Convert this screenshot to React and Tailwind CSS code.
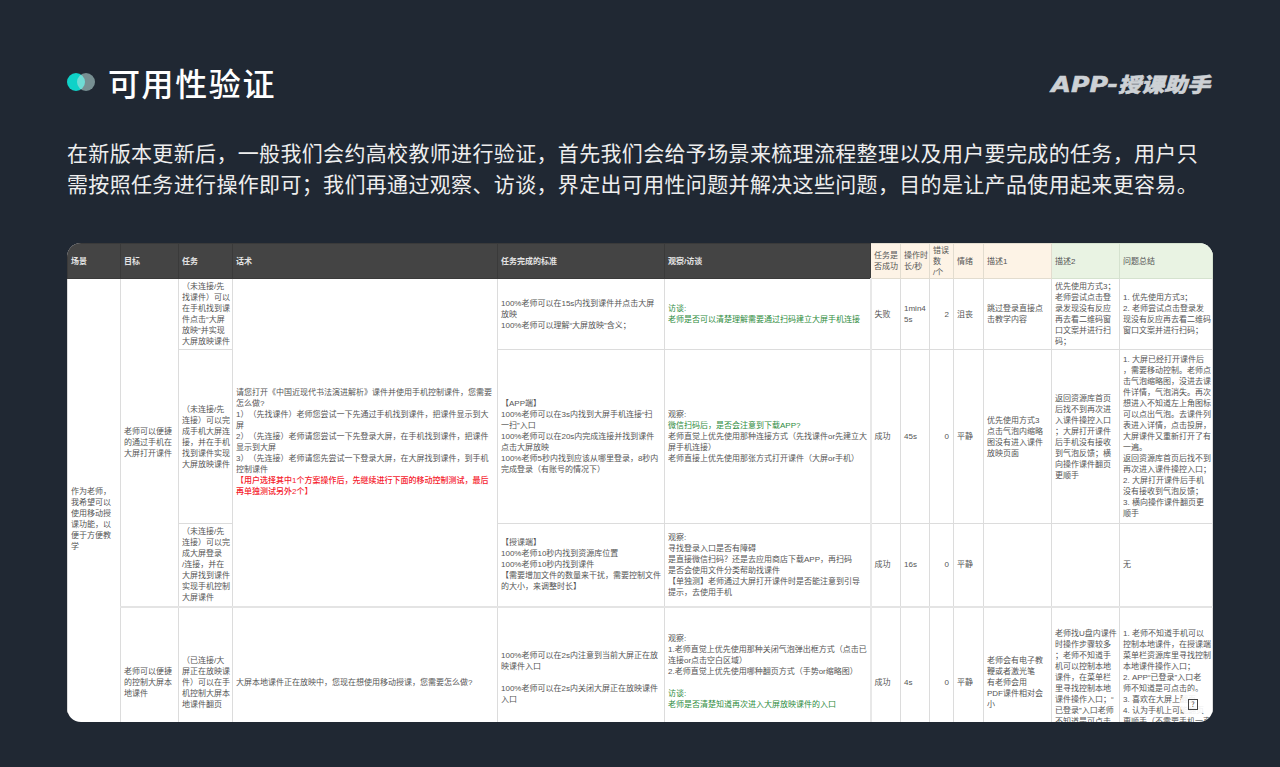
import React from "react";

const cell = "border border-[#dcdcdc] pl-[3px] pr-[1px] align-middle";
const wide = "border border-[#dcdcdc] pl-[3px] pr-[6px] align-middle";
const std = "border border-[#dcdcdc] pl-[3px] pr-[2.5px] align-middle";
const num = "border border-[#dcdcdc] pl-[3px] pr-[4px] align-middle text-right";
const first = "border border-[#dcdcdc] border-l-2 border-l-[#e8e8e8] pl-[3px] pr-[1px] align-middle";
const head = "border border-[#3a3a3a] pl-[3px] pr-[1px] align-middle text-left font-bold text-[#e4e4e4] bg-[#444444]";
const warm = "border border-[#e2dccf] pl-[3px] pr-[1px] align-middle text-left font-normal text-[#555555] bg-[#fdf3e6]";
const mint = "border border-[#d5e2cf] pl-[3px] pr-[1px] align-middle text-left font-normal text-[#555555] bg-[#e9f3e3]";

const Green = ({ children }) => <span className="text-[#2e8b3d]">{children}</span>;

const App = () => {
    return (
        <div className="w-[1280px] h-[767px] overflow-hidden bg-[#202833] font-['Noto_Sans_CJK_SC','Noto_Sans',sans-serif]">
            <div className="flex items-center justify-between pl-[67px] pr-[68px] pt-[62px]">
                <div className="flex items-center gap-[13px]">
                    <svg width="28" height="20" viewBox="0 0 28 20">
                        <circle cx="9" cy="10" r="9" fill="#0fd2c8" />
                        <circle cx="19" cy="10" r="9" fill="#bfe3e0" fillOpacity="0.55" />
                    </svg>
                    <h1 className="text-[32px] leading-[38px] font-medium tracking-[1.6px] text-white">可用性验证</h1>
                </div>
                <p className="origin-right scale-x-[1.15] translate-y-[3px] mr-[2px] italic font-black text-[20px] leading-[38px] text-[#cdd1d5] [-webkit-text-stroke:0.6px_#cdd1d5]">
                    <span className="font-['DejaVu_Sans',sans-serif] font-bold text-[22px] leading-[38px]">APP-</span>授课助手
                </p>
            </div>

            <p className="mt-[36px] mx-[67px] w-[1146px] text-[21px] leading-[31px] tracking-[0.34px] text-[#eeeeee]">
                在新版本更新后，一般我们会约高校教师进行验证，首先我们会给予场景来梳理流程整理以及用户要完成的任务，用户只需按照任务进行操作即可；我们再通过观察、访谈，界定出可用性问题并解决这些问题，目的是让产品使用起来更容易。
            </p>

            <div className="relative mt-[44px] mx-[67px] h-[479px] overflow-hidden rounded-[14px] bg-white">
                <table className="table-fixed w-[1145px] border-collapse break-words [line-break:anywhere] [text-spacing-trim:space-all] font-['Liberation_Sans','Noto_Sans_CJK_SC',sans-serif] text-[8px] leading-[11px] text-[#555555]">
                    <colgroup>
                        <col className="w-[53px]" />
                        <col className="w-[58px]" />
                        <col className="w-[54px]" />
                        <col className="w-[265px]" />
                        <col className="w-[167px]" />
                        <col className="w-[206px]" />
                        <col className="w-[30px]" />
                        <col className="w-[29px]" />
                        <col className="w-[24px]" />
                        <col className="w-[30px]" />
                        <col className="w-[68px]" />
                        <col className="w-[68px]" />
                        <col className="w-[93px]" />
                    </colgroup>
                    <thead>
                        <tr className="h-[35px]">
                            <th className={head}>场景</th>
                            <th className={head}>目标</th>
                            <th className={head}>任务</th>
                            <th className={head}>话术</th>
                            <th className={head}>任务完成的标准</th>
                            <th className={head}>观察/访谈</th>
                            <th className={warm}>任务是否成功</th>
                            <th className={warm}>操作时长/秒</th>
                            <th className={warm}>错误<br />数<br />/个</th>
                            <th className={warm}>情绪</th>
                            <th className={warm}>描述1</th>
                            <th className={mint}>描述2</th>
                            <th className={mint}>问题总结</th>
                        </tr>
                    </thead>
                    <tbody>
                        <tr className="h-[71px]">
                            <td rowSpan={4} className={wide}>作为老师，我希望可以使用移动授课功能，以便于方便教学</td>
                            <td rowSpan={3} className={wide}>老师可以便捷的通过手机在大屏打开课件</td>
                            <td className={cell}>（未连接/先找课件）可以在手机找到课件点击“大屏放映”并实现大屏放映课件</td>
                            <td rowSpan={3} className={cell}>
                                请您打开《中国近现代书法演进解析》课件并使用手机控制课件，您需要怎么做?
                                <br />1）（先找课件）老师您尝试一下先通过手机找到课件，把课件显示到大屏
                                <br />2）（先连接）老师请您尝试一下先登录大屏，在手机找到课件，把课件显示到大屏
                                <br />3）（先连接）老师请您先尝试一下登录大屏，在大屏找到课件，到手机控制课件
                                <br />
                                <span className="font-medium text-[#f5222d]">【用户选择其中1个方案操作后，先继续进行下面的移动控制测试，最后再单独测试另外2个】</span>
                            </td>
                            <td className={std}>
                                100%老师可以在15s内找到课件并点击大屏放映
                                <br />100%老师可以理解“大屏放映”含义；
                            </td>
                            <td className={cell}>
                                <Green>访谈:<br />老师是否可以清楚理解需要通过扫码建立大屏手机连接</Green>
                            </td>
                            <td className={first}>失败</td>
                            <td className={cell}>1min45s</td>
                            <td className={num}>2</td>
                            <td className={cell}>沮丧</td>
                            <td className={cell}>跳过登录直接点击教学内容</td>
                            <td className={cell}>优先使用方式3；老师尝试点击登录发现没有反应再去看二维码窗口文案并进行扫码；</td>
                            <td className={cell}>1. 优先使用方式3；<br />2. 老师尝试点击登录发现没有反应再去看二维码窗口文案并进行扫码；</td>
                        </tr>
                        <tr className="h-[174px]">
                            <td className={cell}>（未连接/先连接）可以完成手机大屏连接，并在手机找到课件实现大屏放映课件</td>
                            <td className={std}>
                                【APP端】
                                <br />100%老师可以在3s内找到大屏手机连接“扫<br />一扫”入口
                                <br />100%老师可以在20s内完成连接并找到课件点击大屏放映
                                <br />100%老师5秒内找到应该从哪里登录，8秒内完成登录（有账号的情况下）
                            </td>
                            <td className={cell}>
                                观察:
                                <br /><Green>微信扫码后，是否会注意到下载APP?</Green>
                                <br />老师直觉上优先使用那种连接方式（先找课件or先建立大屏手机连接）
                                <br />老师直接上优先使用那张方式打开课件（大屏or手机）
                            </td>
                            <td className={first}>成功</td>
                            <td className={cell}>45s</td>
                            <td className={num}>0</td>
                            <td className={cell}>平静</td>
                            <td className={cell}>优先使用方式3<br />点击气泡内缩略图没有进入课件放映页面</td>
                            <td className={cell}>返回资源库首页后找不到再次进入课件操控入口；大屏打开课件后手机没有接收到气泡反馈；横向操作课件翻页更顺手</td>
                            <td className={cell}>
                                1. 大屏已经打开课件后，需要移动控制。老师点击气泡缩略图，没进去课件详情，气泡消失。再次想进入不知道左上角图标可以点出气泡。去课件列表进入详情，点击投屏，大屏课件又重新打开了有一遍。
                                <br />返回资源库首页后找不到再次进入课件操控入口；
                                <br />2. 大屏打开课件后手机没有接收到气泡反馈；
                                <br />3. 横向操作课件翻页更顺手
                            </td>
                        </tr>
                        <tr className="h-[83px] border-b-2 border-[#e4e4e4]">
                            <td className={cell}>（未连接/先连接）可以完成大屏登录<br />/连接，并在大屏找到课件实现手机控制大屏课件</td>
                            <td className={std}>
                                【授课端】
                                <br />100%老师10秒内找到资源库位置
                                <br />100%老师10秒内找到课件
                                <br />【需要增加文件的数量来干扰，需要控制文件的大小，来调整时长】
                            </td>
                            <td className={cell}>
                                观察:
                                <br />寻找登录入口是否有障碍
                                <br />是直接微信扫码？还是去应用商店下载APP，再扫码
                                <br />是否会使用文件分类帮助找课件
                                <br />【单独测】老师通过大屏打开课件时是否能注意到引导<br />提示，去使用手机
                            </td>
                            <td className={first}>成功</td>
                            <td className={cell}>16s</td>
                            <td className={num}>0</td>
                            <td className={cell}>平静</td>
                            <td className={cell}></td>
                            <td className={cell}></td>
                            <td className={cell}>无</td>
                        </tr>
                        <tr className="h-[152px]">
                            <td className={wide}>老师可以便捷的控制大屏本地课件</td>
                            <td className={cell}>（已连接/大屏正在放映课件）可以在手机控制大屏本地课件翻页</td>
                            <td className={cell}>大屏本地课件正在放映中，您现在想使用移动授课，您需要怎么做?</td>
                            <td className={std}>
                                100%老师可以在2s内注意到当前大屏正在放映课件入口
                                <br /><br />100%老师可以在2s内关闭大屏正在放映课件入口
                                <br /><br />
                            </td>
                            <td className={cell}>
                                观察:
                                <br />1.老师直觉上优先使用那种关闭气泡弹出框方式（点击已连接or点击空白区域）
                                <br />2.老师直觉上优先使用哪种翻页方式（手势or缩略图）
                                <br /><br /><Green>访谈:<br />老师是否清楚知道再次进入大屏放映课件的入口</Green>
                                <br /><br /><br />
                            </td>
                            <td className={first}>成功</td>
                            <td className={cell}>4s</td>
                            <td className={num}>0</td>
                            <td className={cell}>平静</td>
                            <td className={cell}>老师会有电子教鞭或者激光笔<br />有老师会用<br />PDF课件相对会小</td>
                            <td className={cell}>老师找U盘内课件时操作步骤较多；老师不知道手机可以控制本地课件，在菜单栏里寻找控制本地课件操作入口；“已登录”入口老师不知道是可点击的。</td>
                            <td className={cell}>
                                1. 老师不知道手机可以控制本地课件，在授课端菜单栏资源库里寻找控制本地课件操作入口；
                                <br />2. APP“已登录”入口老<br />师不知道是可点击的。
                                <br />3. 喜欢在大屏上翻页
                                <br />4. 认为手机上可能翻页更顺手（不需要手机一直对着大屏）
                            </td>
                        </tr>
                    </tbody>
                </table>
                <div className="absolute right-[7px] bottom-[5px] flex h-[26px] w-[26px] items-center justify-center rounded-full bg-white/90">
                    <span className="flex h-[11px] w-[10px] items-center justify-center border border-[#444444] text-[7px] leading-none text-[#444444]">?</span>
                </div>
            </div>
        </div>
    );
};

export default App;
